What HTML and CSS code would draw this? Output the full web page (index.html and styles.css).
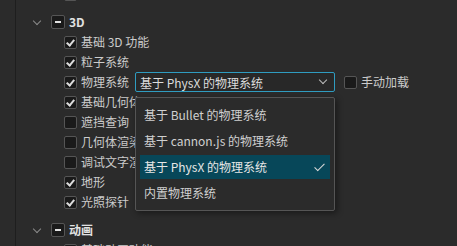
FILE: index.html
```html
<!DOCTYPE html>
<html lang="zh">
<head>
  <meta charset="UTF-8" />
  <title>功能裁剪</title>
  <link rel="stylesheet" href="styles.css">
</head>
<body>
  <div class="panel">
    <div class="tree">
      <div class="row child first"><span class="check"></span></div>

      <div class="row group">
        <span class="chevron"></span>
        <span class="check mixed"></span>
        <span class="label">3D</span>
      </div>
      <div class="row child"><span class="check on"></span><span class="label">基础 3D 功能</span></div>
      <div class="row child"><span class="check on"></span><span class="label">粒子系统</span></div>
      <div class="row child">
        <span class="check on"></span><span class="label">物理系统</span>
        <div class="select">
          <span>基于 PhysX 的物理系统</span>
          <span class="select-arrow"></span>
        </div>
        <span class="check extra"></span><span class="label">手动加载</span>
      </div>
      <div class="row child"><span class="check on"></span><span class="label">基础几何体工具</span></div>
      <div class="row child"><span class="check"></span><span class="label">遮挡查询</span></div>
      <div class="row child"><span class="check"></span><span class="label">几何体渲染工具</span></div>
      <div class="row child"><span class="check"></span><span class="label">调试文字渲染</span></div>
      <div class="row child"><span class="check on"></span><span class="label">地形</span></div>
      <div class="row child"><span class="check on"></span><span class="label">光照探针</span></div>

      <div class="row group">
        <span class="chevron"></span>
        <span class="check mixed"></span>
        <span class="label">动画</span>
      </div>
      <div class="row child"><span class="check"></span><span class="label">基础动画功能</span></div>
    </div>

    <div class="dropdown">
      <div class="option">基于 Bullet 的物理系统</div>
      <div class="option">基于 cannon.js 的物理系统</div>
      <div class="option selected">基于 PhysX 的物理系统<span class="tick"></span></div>
      <div class="option">内置物理系统</div>
    </div>
  </div>
</body>
</html>
```

FILE: styles.css
```css
body {
  margin: 0;
  width: 457px;
  height: 246px;
  overflow: hidden;
  background: #2b2b2b;
  font-family: "Noto Sans CJK SC", "Noto Sans", sans-serif;
  font-size: 12px;
  color: #cccccc;
}

.panel {
  position: relative;
  height: 246px;
  border-left: 1px solid #1e1e1e;
  margin-left: 15px;
}

.tree {
  display: flex;
  flex-direction: column;
}

.row {
  display: flex;
  align-items: center;
  height: 20px;
  white-space: nowrap;
}

.row.first {
  margin-top: -16px;
}

.row.group {
  margin-top: 8px;
  padding-left: 15px;
}

.row.group .label {
  font-weight: 700;
  color: #e2e2e2;
  margin-left: 4px;
}

.row.child {
  padding-left: 48px;
}

.label {
  margin-left: 4px;
  line-height: 20px;
}

.chevron {
  width: 5px;
  height: 5px;
  border-right: 1.5px solid #8a8a8a;
  border-bottom: 1.5px solid #8a8a8a;
  transform: rotate(45deg);
  margin: -3px 11px 0 3px;
}

.check {
  position: relative;
  box-sizing: border-box;
  width: 13px;
  height: 13px;
  flex: none;
  background: #1a1a1a;
  border: 1px solid #555555;
  border-radius: 2px;
}

.check.on::after {
  content: "";
  position: absolute;
  left: 3px;
  top: 1px;
  width: 3px;
  height: 6px;
  border-right: 2px solid #dcdcdc;
  border-bottom: 2px solid #dcdcdc;
  transform: rotate(40deg);
}

.check.mixed {
  width: 14px;
  height: 14px;
}

.check.mixed::after {
  content: "";
  position: absolute;
  left: 3px;
  top: 5px;
  width: 6px;
  height: 1.5px;
  background: #e0e0e0;
}

.select {
  box-sizing: border-box;
  display: flex;
  align-items: center;
  justify-content: space-between;
  width: 200px;
  height: 20px;
  margin-left: 6px;
  padding: 0 8px 0 4px;
  background: #282828;
  border: 1px solid #2f9cc0;
  border-radius: 2px;
  color: #dddddd;
}

.select-arrow {
  width: 5px;
  height: 5px;
  border-right: 1.5px solid #bbbbbb;
  border-bottom: 1.5px solid #bbbbbb;
  transform: rotate(45deg);
  margin-top: -4px;
}

.check.extra {
  margin-left: 9px;
}

.dropdown {
  position: absolute;
  left: 119px;
  top: 97px;
  box-sizing: border-box;
  width: 200px;
  padding: 5px 4px;
  display: flex;
  flex-direction: column;
  gap: 2px;
  background: #2b2b2b;
  border: 1px solid #555555;
  border-radius: 2px;
  box-shadow: 2px 2px 6px rgba(0, 0, 0, 0.45);
}

.option {
  position: relative;
  height: 24px;
  line-height: 24px;
  padding-left: 4px;
  color: #d0d0d0;
}

.option.selected {
  background: #074759;
  color: #e6e6e6;
}

.tick {
  position: absolute;
  right: 8px;
  top: 6px;
  width: 4px;
  height: 9px;
  border-right: 1.5px solid #d8d8d8;
  border-bottom: 1.5px solid #d8d8d8;
  transform: rotate(45deg);
}
```
